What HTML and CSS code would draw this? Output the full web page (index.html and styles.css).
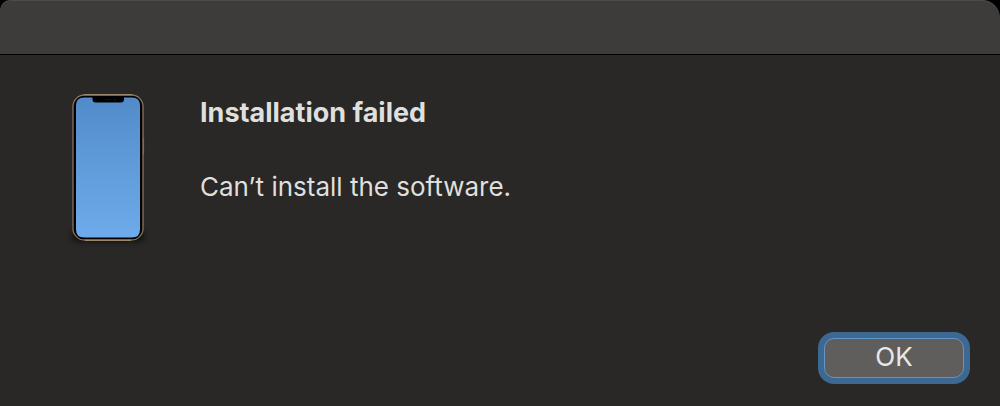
FILE: index.html
```
<!DOCTYPE html>
<html lang="en">
<head>
	<meta charset="UTF-8">
	<meta name="viewport" content="width=device-width, initial-scale=1">
	<title>Installation failed</title>
	<link rel="stylesheet" href="styles.css">
</head>
<body>
	<main class="window">
		<header class="titlebar"></header>
		<div class="content">
			<svg class="phone" width="88" height="160" viewBox="0 0 88 160" aria-hidden="true">
				<defs>
					<linearGradient id="screen" x1="0" y1="0" x2="0" y2="1">
						<stop offset="0" stop-color="#528bca"/>
						<stop offset="1" stop-color="#6eabea"/>
					</linearGradient>
					<filter id="shadow" x="-20%" y="-100%" width="140%" height="300%">
						<feGaussianBlur stdDeviation="3"/>
					</filter>
				</defs>
				<rect x="8" y="144" width="72" height="9" rx="4" fill="#000" opacity=".7" filter="url(#shadow)"/>
				<path d="M79.600 50v16" stroke="#6f6351" stroke-width="1"/>
				<rect x="9" y="7" width="70" height="145" rx="11.500" fill="#000" stroke="#857661" stroke-width="1.300"/>
				<path d="M20 6.700h48M21 152.300h46" stroke="#a59273" stroke-width="1"/>
				<path d="M20 9.500h8.500v2q0 3 3 3h25.500q3 0 3-3v-2h8q8 0 8 8v124q0 8-8 8H20q-8 0-8-8v-124q0-8 8-8z" fill="url(#screen)"/>
				<path d="M41 11.500h6" stroke="#111319"/>
				<circle cx="51" cy="11.500" r="1" fill="#11182a"/>
			</svg>
			<div class="message">
				<h1 class="title">Installation failed</h1>
				<p class="text">Can’t install the software.</p>
			</div>
		</div>
		<footer class="actions">
			<button class="button" type="button" autofocus>OK</button>
		</footer>
	</main>
</body>
</html>
```
FILE: styles.css
```
* {
	box-sizing: border-box;
}
body {
	margin: 0;
	background: #000;
	color: #dfdfde;
	font-family: Inter, "Liberation Sans", sans-serif;
	font-size: 26px;
	line-height: 32px;
}
.window {
	display: flex;
	flex-direction: column;
	min-height: 100vh;
	background: #292826;
	border-radius: 10px 18px 0 0;
	overflow: hidden;
}
.titlebar {
	height: 55px;
	background: #3d3c3a;
	border-bottom: 1px solid #000;
	border-radius: 10px 18px 0 0;
	box-shadow: inset 0 1px 0 #4c4b49;
}
.content {
	display: flex;
	flex: 1;
	gap: 48px;
	padding: 33px 64px 0;
}
.phone {
	flex: none;
}
.message {
	padding-top: 9px;
}
.title {
	margin: 0 0 42px;
	font-size: 27px;
	font-weight: 700;
}
.text {
	margin: 0;
}
.actions {
	display: flex;
	justify-content: flex-end;
	padding: 0 36px 28px;
}
.button {
	width: 140px;
	height: 40px;
	padding: 0 0 2px;
	border: 1px solid #6296c5;
	border-radius: 10px;
	background: #5f5e5c;
	box-shadow: 0 0 0 6px #3d6891;
	color: #e8e8e7;
	font: inherit;
	outline: none;
}
```
